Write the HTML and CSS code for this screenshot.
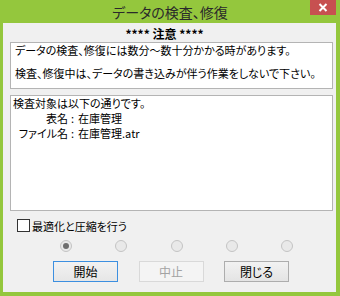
FILE: index.html
```html
<!DOCTYPE html>
<html lang="ja">
<head>
<meta charset="utf-8">
<link rel="stylesheet" href="styles.css">
</head>
<body>
<div class="window">
  <div class="titlebar">
    <div class="title">データの検査、修復</div>
    <div class="close"><svg width="10" height="9" viewBox="0 0 10 9"><path d="M1.5 1 L8.5 8 M8.5 1 L1.5 8" stroke="#fff" stroke-width="2" fill="none"/></svg></div>
  </div>
  <div class="client">
    <div class="heading">**** 注意 ****</div>
    <div class="notice">
      <div class="line">データの検査、修復には数分〜数十分かかる時があります。</div>
      <div class="line second">検査、修復中は、データの書き込みが伴う作業をしないで下さい。</div>
    </div>
    <div class="target">
      <div class="tline">検査対象は以下の通りです。</div>
      <div class="kv">
        <span class="k">表名</span><span class="sep">:</span><span class="v">在庫管理</span>
        <span class="k">ファイル名</span><span class="sep">:</span><span class="v">在庫管理.atr</span>
      </div>
    </div>
    <label class="check"><span class="box"></span><span class="clabel">最適化と圧縮を行う</span></label>
    <div class="radios">
      <span class="radio on"></span>
      <span class="radio"></span>
      <span class="radio"></span>
      <span class="radio"></span>
      <span class="radio"></span>
    </div>
    <div class="buttons">
      <div class="btn primary">開始</div>
      <div class="btn disabled">中止</div>
      <div class="btn">閉じる</div>
    </div>
  </div>
</div>
</body>
</html>
```
FILE: styles.css
```css
* { box-sizing: border-box; }
html, body { margin: 0; padding: 0; }
body {
  width: 340px;
  height: 296px;
  background: #94c73d;
  font-family: "Noto Sans CJK JP", "Noto Sans", sans-serif;
  font-size: 11px;
  color: #000;
  overflow: hidden;
}
.window { display: flex; flex-direction: column; height: 296px; }
.titlebar {
  position: relative;
  height: 23px;
  flex: none;
  display: flex;
  align-items: center;
  justify-content: center;
}
.title {
  font-size: 14px;
  line-height: 16px;
  color: #2a2a2a;
  font-feature-settings: "palt";
  margin-top: 1px;
}
.close {
  position: absolute;
  right: 4px;
  top: 0;
  width: 26px;
  height: 15px;
  background: #c75050;
  display: flex;
  align-items: center;
  justify-content: center;
}
.client {
  flex: none;
  background: #f0f0f0;
  margin: 0 4px 0 3px;
  height: 269px;
  display: flex;
  flex-direction: column;
  font-feature-settings: "palt";
}
.heading {
  padding-top: 4px;
  padding-right: 10px;
  line-height: 14px;
  font-size: 12px;
  text-align: center;
  font-weight: bold;
}
.notice {
  margin: 1px 3px 0 7px;
  height: 47px;
  background: #fff;
  border: 1px solid #b4b4b4;
  padding: 0 4px;
}
.line { line-height: 14px; white-space: nowrap; }
.line.second { margin-top: 9px; }
.target {
  margin: 6px 3px 0 7px;
  height: 116px;
  background: #fff;
  border: 1px solid #b4b4b4;
  padding: 0 2px;
}
.tline { line-height: 15px; }
.kv {
  display: grid;
  grid-template-columns: 55px auto 1fr;
  line-height: 15px;
}
.k { text-align: right; white-space: nowrap; }
.sep { padding: 0 4px 0 3px; }
.check {
  display: flex;
  align-items: center;
  margin: 8px 0 0 14px;
  height: 13px;
}
.box {
  width: 13px;
  height: 13px;
  border: 1px solid #333;
  background: #fff;
}
.clabel { margin-left: 2px; line-height: 14px; }
.radios {
  display: flex;
  gap: 43.3px;
  margin: 8px 0 0 57px;
  height: 12px;
}
.radio {
  width: 12px;
  height: 12px;
  border-radius: 50%;
  border: 1px solid #c4c4c4;
  background: #e9e9e9;
  display: flex;
  align-items: center;
  justify-content: center;
}
.radio.on::after {
  content: "";
  width: 6px;
  height: 6px;
  border-radius: 50%;
  background: #6e6e6e;
}
.buttons {
  display: flex;
  gap: 20.5px;
  margin: 9px 0 0 50px;
}
.btn {
  width: 65px;
  height: 21px;
  border: 1px solid #adadad;
  background: linear-gradient(#f2f2f2, #e4e4e4);
  display: flex;
  align-items: center;
  justify-content: center;
  font-size: 12px;
  line-height: 14px;
}
.btn.primary {
  border-color: #3c8fe0;
  background: linear-gradient(#f2f2f2, #e6e6e6);
}
.btn.disabled {
  border-color: #d9d9d9;
  background: #f4f4f4;
  color: #a3a3a3;
}
```
